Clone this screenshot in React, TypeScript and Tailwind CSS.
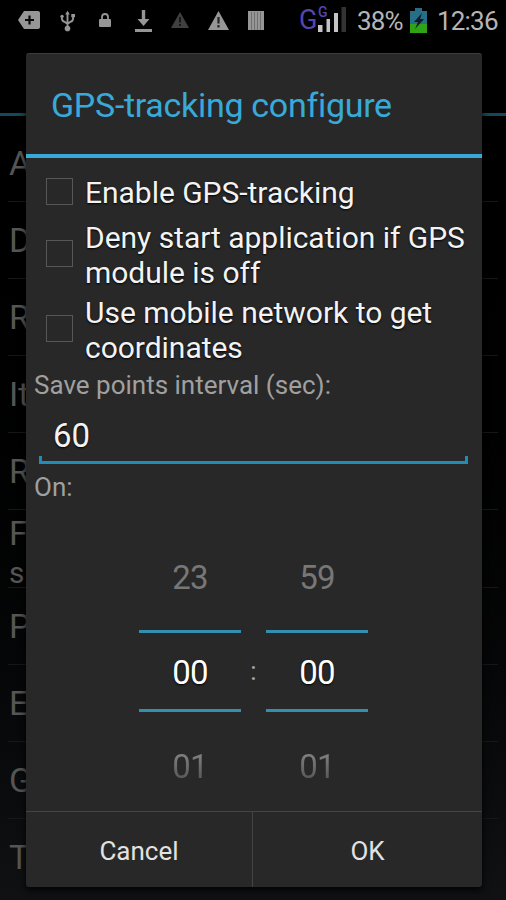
import type { ReactNode } from "react";

const backgroundRows = ["A", "D", "R", "It", "R", "F", "P", "E", "G", "T"];

function StatusBar() {
  return (
    <header className="h-10 shrink-0 pl-[18px] pr-2 flex items-center justify-between text-[#969696]">
      <div className="flex items-center">
        <svg className="w-[22px] h-[18px]" viewBox="0 0 22 18" fill="currentColor">
          <path d="M6 0H20Q22 0 22 2V16Q22 18 20 18H6L0 9Z" />
          <path d="M11.500 4.500V13.500M7 9H16" stroke="#080808" strokeWidth="2.200" />
        </svg>
        <svg className="w-[15px] h-[22px] ml-5 mt-0.5" viewBox="0 0 16 22" fill="none" stroke="currentColor" strokeWidth="2">
          <path d="M8 2V18M2 6V8Q2 11 5 12L8 14M14 6V8Q14 11 11 12L8 14" />
          <path d="M8 0L10.500 4H5.500Z" fill="currentColor" stroke="none" />
          <circle cx="8" cy="19" r="3" fill="currentColor" stroke="none" />
          <circle cx="2.200" cy="6" r="1.800" fill="currentColor" stroke="none" />
          <path d="M12 3.500H16V7H12Z" fill="currentColor" stroke="none" />
        </svg>
        <svg className="w-3 h-[14px] ml-6" viewBox="0 0 12 14" fill="none" stroke="currentColor">
          <path d="M3 7V4Q3 1 6 1T9 4V7" strokeWidth="1.800" />
          <rect x="0" y="6" width="12" height="8" rx="1" fill="currentColor" stroke="none" />
        </svg>
        <svg className="w-[17px] h-[22px] ml-6 mt-0.5" viewBox="0 0 17 22" fill="currentColor">
          <path d="M6.800 0H10.200V9H14.500L8.500 16L2.500 9H6.800ZM0 19H17V22H0Z" />
        </svg>
        <svg className="w-[18px] h-4 ml-[19px] text-[#404040]" viewBox="0 0 18 16" fill="currentColor">
          <path d="M9 0L18 16H0Z" />
          <path d="M9 5V10.500M9 12V14" stroke="#151515" strokeWidth="1.800" />
        </svg>
        <svg className="w-[21px] h-[19px] ml-[19px]" viewBox="0 0 21 19" fill="currentColor">
          <path d="M10.500 0L21 19H0Z" />
          <path d="M10.500 6V12.500M10.500 14V16.500" stroke="#252525" strokeWidth="2.200" />
        </svg>
        <svg className="w-4 h-[19px] ml-[19px]" viewBox="0 0 16 19" fill="currentColor">
          <path d="M0 0H16V19H0Z" />
          <path d="M3.500 1V19M6.500 1V19M9.500 1V19M12.500 1V19" stroke="#707070" />
        </svg>
      </div>
      <div className="flex items-center text-[#b5b5b5] text-[26px] leading-10">
        <div className="relative w-[47px] h-7">
          <span className="absolute -left-px top-0 text-[27px] leading-7 text-[#5645af]">G</span>
          <span className="absolute left-[18px] -top-px text-[14px] leading-[14px] font-medium text-[#5645af]">G</span>
          <svg className="absolute left-[18px] top-px" width="28" height="25" viewBox="0 0 28 25" fill="#c4c4c4">
            <path d="M0 18H4.500V25H0ZM8.500 12H12V25H8.500ZM16 6H20V25H16Z" />
            <path d="M23.500 0H28V25H23.500Z" fill="#333333" />
          </svg>
        </div>
        <span className="ml-[10px] pt-0.5 w-[47px] whitespace-nowrap tracking-[-0.8px]">38%</span>
        <svg className="w-[17px] h-[25px] ml-[6px]" viewBox="0 0 17 25">
          <path d="M5 0H12V3H17V25H0V3H5Z" fill="#286e88" />
          <path d="M0 16H17V25H0Z" fill="#2fa515" />
          <path d="M12 5L4 14H8L5 21L14 11H10Z" fill="#101c22" />
        </svg>
        <span className="ml-[10px] pt-0.5 w-[61px] whitespace-nowrap tracking-[-0.8px]">12:36</span>
      </div>
    </header>
  );
}

function CheckRow({ children, className }: { children: ReactNode; className: string }) {
  return (
    <label className={`flex items-center pl-5 text-[30px] leading-[35px] text-[#f3f3f3] ${className}`}>
      <span className="w-[27px] h-[27px] shrink-0 border-[1.5px] border-[#575757]" />
      <span className="ml-3 pt-0.5 whitespace-nowrap tracking-[-0.03px] [text-shadow:0_1px_2px_black]">{children}</span>
    </label>
  );
}

function NumberPicker({ before, value, after }: { before: string; value: string; after: string }) {
  return (
    <div className="w-[102px] text-center text-[33px] tracking-[-0.7px]">
      <div className="h-[107px] pt-px leading-[107px] text-[#777777]">{before}</div>
      <div className="h-[82px] border-y-[3px] border-[#338faf] pt-px leading-[78px] text-white [text-shadow:0_1px_2px_black]">
        {value}
      </div>
      <div className="h-[98px] pt-[5px] leading-[100px] bg-linear-to-b from-[#858585] from-40% to-[#555555] to-70% bg-clip-text text-transparent">
        {after}
      </div>
    </div>
  );
}

function GpsDialog() {
  return (
    <section className="absolute left-[26px] top-[53px] w-[456px] h-[834px] flex flex-col [&>*]:shrink-0 rounded-[3px] bg-[#282828] border-t border-[#3c3c3c] shadow-[0_3px_7px_rgba(0,0,0,0.9)]">
      <h1 className="h-[104px] pl-[25px] pt-px text-[34px] leading-[101px] tracking-[-0.3px] whitespace-nowrap text-[#38aad9] border-b-4 border-[#38aad9]">
        GPS-tracking configure
      </h1>
      <CheckRow className="h-[58px] pt-2">Enable GPS-tracking</CheckRow>
      <CheckRow className="h-[75px]">
        Deny start application if GPS
        <br />
        module is off
      </CheckRow>
      <CheckRow className="h-[75px]">
        Use mobile network to get
        <br />
        coordinates
      </CheckRow>
      <p className="pl-2 pt-[3px] text-[26px] leading-8 text-[#a0a0a0]">Save points interval (sec):</p>
      <div className="ml-[13px] mr-[14px] h-[63px]">
        <div className="h-[55px] pl-[14px] text-[33px] leading-[70px] text-[#f3f3f3] [text-shadow:0_1px_2px_black]">60</div>
        <div className="h-2 border-x-[3px] border-b-[3px] border-[#218db6]" />
      </div>
      <p className="pl-2 pt-[7px] text-[26px] leading-8 text-[#a0a0a0]">On:</p>
      <div className="pt-5 pr-px flex justify-center">
        <NumberPicker before="23" value="00" after="01" />
        <span className="w-[25px] pt-[109px] text-center text-[26px] leading-[78px] text-[#a8a8a8]">:</span>
        <NumberPicker before="59" value="00" after="01" />
      </div>
      <footer className="mt-auto h-[76px] flex border-t-[1.5px] border-[#444444] text-[26px] text-[#e2e2e2] [text-shadow:0_1px_2px_black]">
        <button className="w-[227px] pt-[3px] border-r border-[#444444]">Cancel</button>
        <button className="flex-1 pt-[3px]">OK</button>
      </footer>
    </section>
  );
}

export default function App() {
  return (
    <div className="relative w-[506px] h-[900px] overflow-hidden flex flex-col bg-linear-to-b from-black from-15% to-[#0f1113] font-[Roboto,sans-serif]">
      <div className="h-10 bg-black">
        <StatusBar />
      </div>
      <div className="h-[76px] shrink-0 border-b-[3px] border-[#13495c]" />
      <ul className="mt-[9px] mx-2 text-[34px] text-[#555555]">
        {backgroundRows.map((row, index) => (
          <li key={index} className="h-[77.1px] pl-px border-b border-[#15181a] last:border-b-0 leading-[77px]">
            {row === "F" ? (
              <div className="pt-[2px]">
                <div className="leading-[42px]">F</div>
                <div className="text-[30px] leading-[38px]">s</div>
              </div>
            ) : (
              row
            )}
          </li>
        ))}
      </ul>
      <GpsDialog />
    </div>
  );
}
